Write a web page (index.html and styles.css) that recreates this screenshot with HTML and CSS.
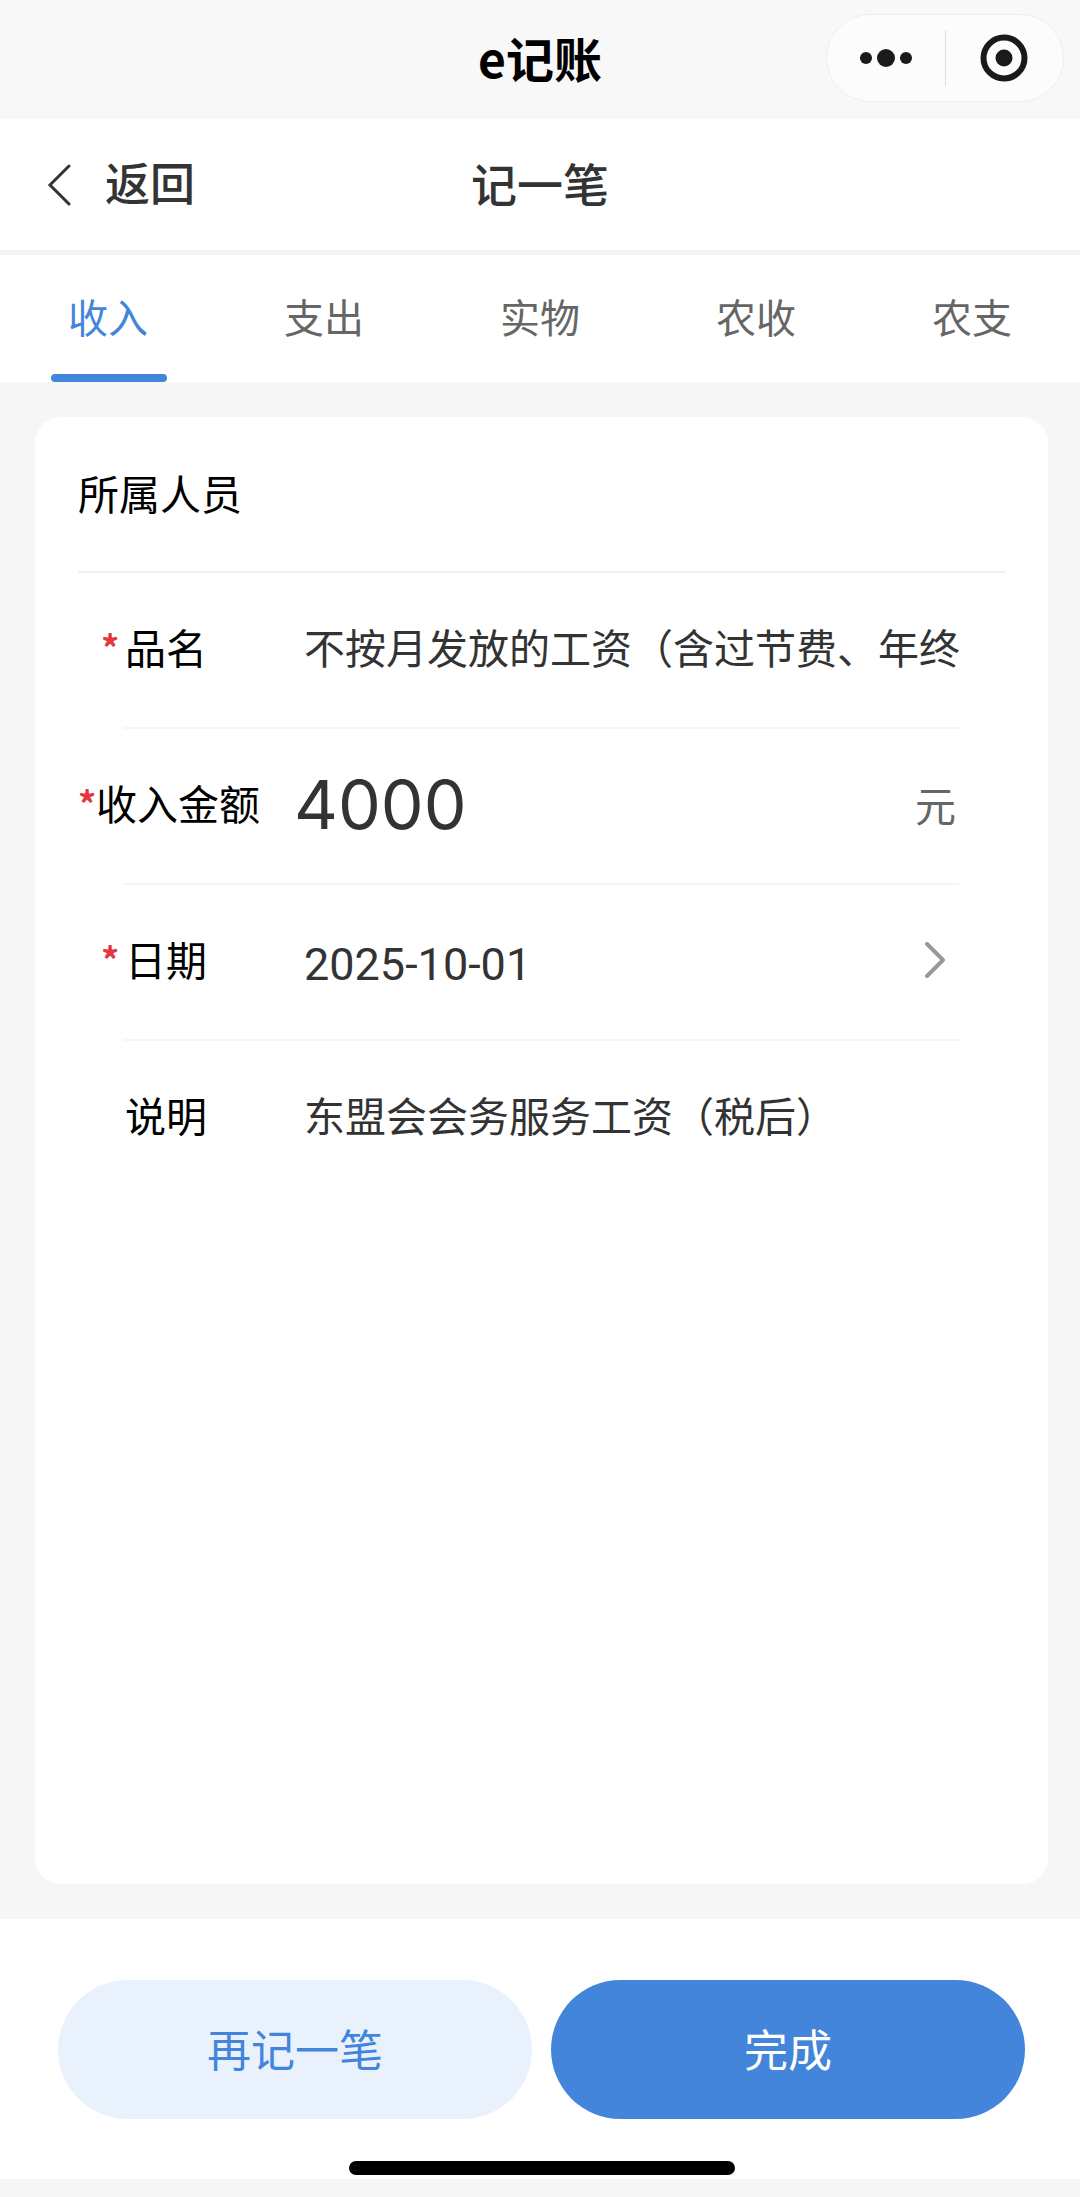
FILE: index.html
```html
<!DOCTYPE html>
<html lang="zh-CN">
<head>
    <meta charset="UTF-8">
    <meta name="viewport" content="width=device-width, initial-scale=1.0">
    <title>e记账</title>
    <link rel="stylesheet" href="styles.css">
</head>
<body>
    <header class="app-bar">
        <h1 class="app-title">e记账</h1>
        <div class="capsule">
            <button class="capsule-btn" type="button" aria-label="更多">
                <svg width="54" height="20" viewBox="0 0 54 20">
                    <circle cx="7" cy="10" r="6"/>
                    <circle cx="27" cy="10" r="9"/>
                    <circle cx="47" cy="10" r="6"/>
                </svg>
            </button>
            <span class="capsule-line"></span>
            <button class="capsule-btn" type="button" aria-label="关闭">
                <svg width="48" height="48" viewBox="0 0 48 48">
                    <circle cx="24" cy="24" r="20.5" fill="none" stroke="#1a1a1a" stroke-width="6"/>
                    <circle cx="24" cy="24" r="8.5"/>
                </svg>
            </button>
        </div>
    </header>

    <div class="nav">
        <a class="back" href="#">
            <svg width="24" height="42" viewBox="0 0 24 42">
                <path d="M22 2 L3 21 L22 40" fill="none" stroke="#333" stroke-width="3" stroke-linecap="round"/>
            </svg>
            <span>返回</span>
        </a>
        <h2 class="nav-title">记一笔</h2>
    </div>

    <nav class="tabs">
        <a class="tab active" href="#">收入</a>
        <a class="tab" href="#">支出</a>
        <a class="tab" href="#">实物</a>
        <a class="tab" href="#">农收</a>
        <a class="tab" href="#">农支</a>
    </nav>

    <form class="card" id="record">
        <h3 class="member">所属人员</h3>
        <div class="row">
            <label class="label" for="name"><span class="star">*</span>品名</label>
            <input class="value" id="name" type="text" value="不按月发放的工资（含过节费、年终">
        </div>
        <div class="row">
            <label class="label label-wide" for="amount"><span class="star">*</span>收入金额</label>
            <input class="value amount" id="amount" type="text" inputmode="decimal" value="4000">
            <span class="unit">元</span>
        </div>
        <div class="row">
            <label class="label" for="date"><span class="star">*</span>日期</label>
            <input class="value date" id="date" type="text" value="2025-10-01" readonly>
            <svg class="arrow" width="22" height="36" viewBox="0 0 22 36">
                <path d="M3 2 L19 18 L3 34" fill="none" stroke="#999" stroke-width="4" stroke-linecap="round" stroke-linejoin="round"/>
            </svg>
        </div>
        <div class="row">
            <label class="label" for="remark"><span class="star"></span>说明</label>
            <input class="value" id="remark" type="text" value="东盟会会务服务工资（税后）">
        </div>
    </form>

    <footer class="footer">
        <div class="buttons">
            <button class="button" type="button">再记一笔</button>
            <button class="button primary" type="submit" form="record">完成</button>
        </div>
        <div class="home-bar"></div>
    </footer>
</body>
</html>
```
FILE: styles.css
```css
* {
    box-sizing: border-box;
}

body {
    display: flex;
    flex-direction: column;
    min-height: 100vh;
    margin: 0;
    padding-bottom: 18px;
    font-family: "Noto Sans CJK SC", sans-serif;
    font-size: 41px;
    line-height: 60px;
    color: #000;
    background-color: #f6f6f6;
}

h1, h2, h3 {
    margin: 0;
}

a {
    color: inherit;
    text-decoration: none;
}

button, input {
    font: inherit;
    border: none;
    padding: 0;
    background: none;
}

/* 顶部标题栏 */
.app-bar {
    position: relative;
    display: flex;
    align-items: center;
    justify-content: center;
    height: 119px;
    background-color: #f8f8f8;
}

.app-title {
    padding-bottom: 6px;
    font-size: 48px;
    font-weight: 700;
}

.capsule {
    position: absolute;
    top: 14px;
    right: 16px;
    display: flex;
    align-items: center;
    width: 238px;
    height: 88px;
    border: 1px solid #eee;
    border-radius: 44px;
    background-color: #fcfcfc;
}

.capsule-btn {
    display: flex;
    flex: 1;
    align-items: center;
    justify-content: center;
    height: 100%;
    fill: #1a1a1a;
}

.capsule-line {
    width: 1px;
    height: 56px;
    background-color: #ddd;
}

/* 返回栏 */
.nav {
    display: grid;
    grid-template-columns: 1fr auto 1fr;
    align-items: center;
    height: 136px;
    padding: 0 47px;
    color: #333;
    background-color: #fff;
    border-bottom: 5px solid #f4f4f7;
}

.back {
    display: flex;
    align-items: center;
    gap: 34px;
    font-size: 45px;
    font-weight: 500;
}

.back span,
.nav-title {
    padding-bottom: 5px;
}

.nav-title {
    font-size: 46px;
    font-weight: 500;
}

.tabs {
    display: flex;
    height: 127px;
    background-color: #fff;
}

.tab {
    position: relative;
    flex: 1;
    font-size: 40px;
    line-height: 123px;
    text-align: center;
    color: #666;
}

.tab.active {
    color: #4285db;
}

.tab.active::after {
    content: "";
    position: absolute;
    bottom: 0;
    left: 50%;
    width: 116px;
    height: 8px;
    margin-left: -57px;
    border-radius: 4px;
    background-color: #4285db;
}

/* 表单 */
.card {
    flex: 1;
    margin: 35px 32px 35px 35px;
    padding: 0 43px;
    border-radius: 26px;
    background-color: #fff;
}

.member {
    padding-bottom: 4px;
    font-size: 41px;
    font-weight: 400;
    line-height: 150px;
    border-bottom: 2px solid #f0f0f0;
}

.row {
    position: relative;
    display: flex;
    align-items: center;
    height: 156px;
    padding: 0 46px 6px 0;
}

.row:not(:last-child)::after {
    content: "";
    position: absolute;
    right: 46px;
    bottom: 0;
    left: 46px;
    height: 2px;
    background-color: #f5f5f5;
}

.label {
    display: flex;
    flex-shrink: 0;
    gap: 6px;
    width: 226px;
    padding: 0 0 4px 23px;
}

.label-wide {
    gap: 0;
    width: 216px;
    padding-left: 0;
}

.star {
    width: 18px;
    font-size: 36px;
    font-weight: 700;
    color: #e0383e;
}

.value {
    flex: 1;
    min-width: 0;
    padding-bottom: 4px;
    color: #333;
    outline: none;
}

.amount {
    padding: 0;
    font-family: Inter, sans-serif;
    font-size: 68px;
    line-height: 80px;
}

.date {
    padding: 10px 0 0;
    font-family: Roboto, sans-serif;
    font-size: 45px;
}

.unit {
    padding-right: 3px;
    color: #666;
}

.arrow {
    margin-right: 13px;
}

/* 底部按钮 */
.footer {
    padding: 61px 55px 4px 58px;
    background-color: #fff;
}

.buttons {
    display: flex;
    gap: 19px;
}

.button {
    flex: 1;
    height: 139px;
    padding-bottom: 4px;
    font-size: 44px;
    color: #4285db;
    border-radius: 70px;
    background-color: #e9f2fc;
}

.button.primary {
    color: #fff;
    background-color: #4285db;
}

.home-bar {
    width: 386px;
    height: 14px;
    margin: 42px auto 0;
    border-radius: 7px;
    background-color: #000;
}
```
